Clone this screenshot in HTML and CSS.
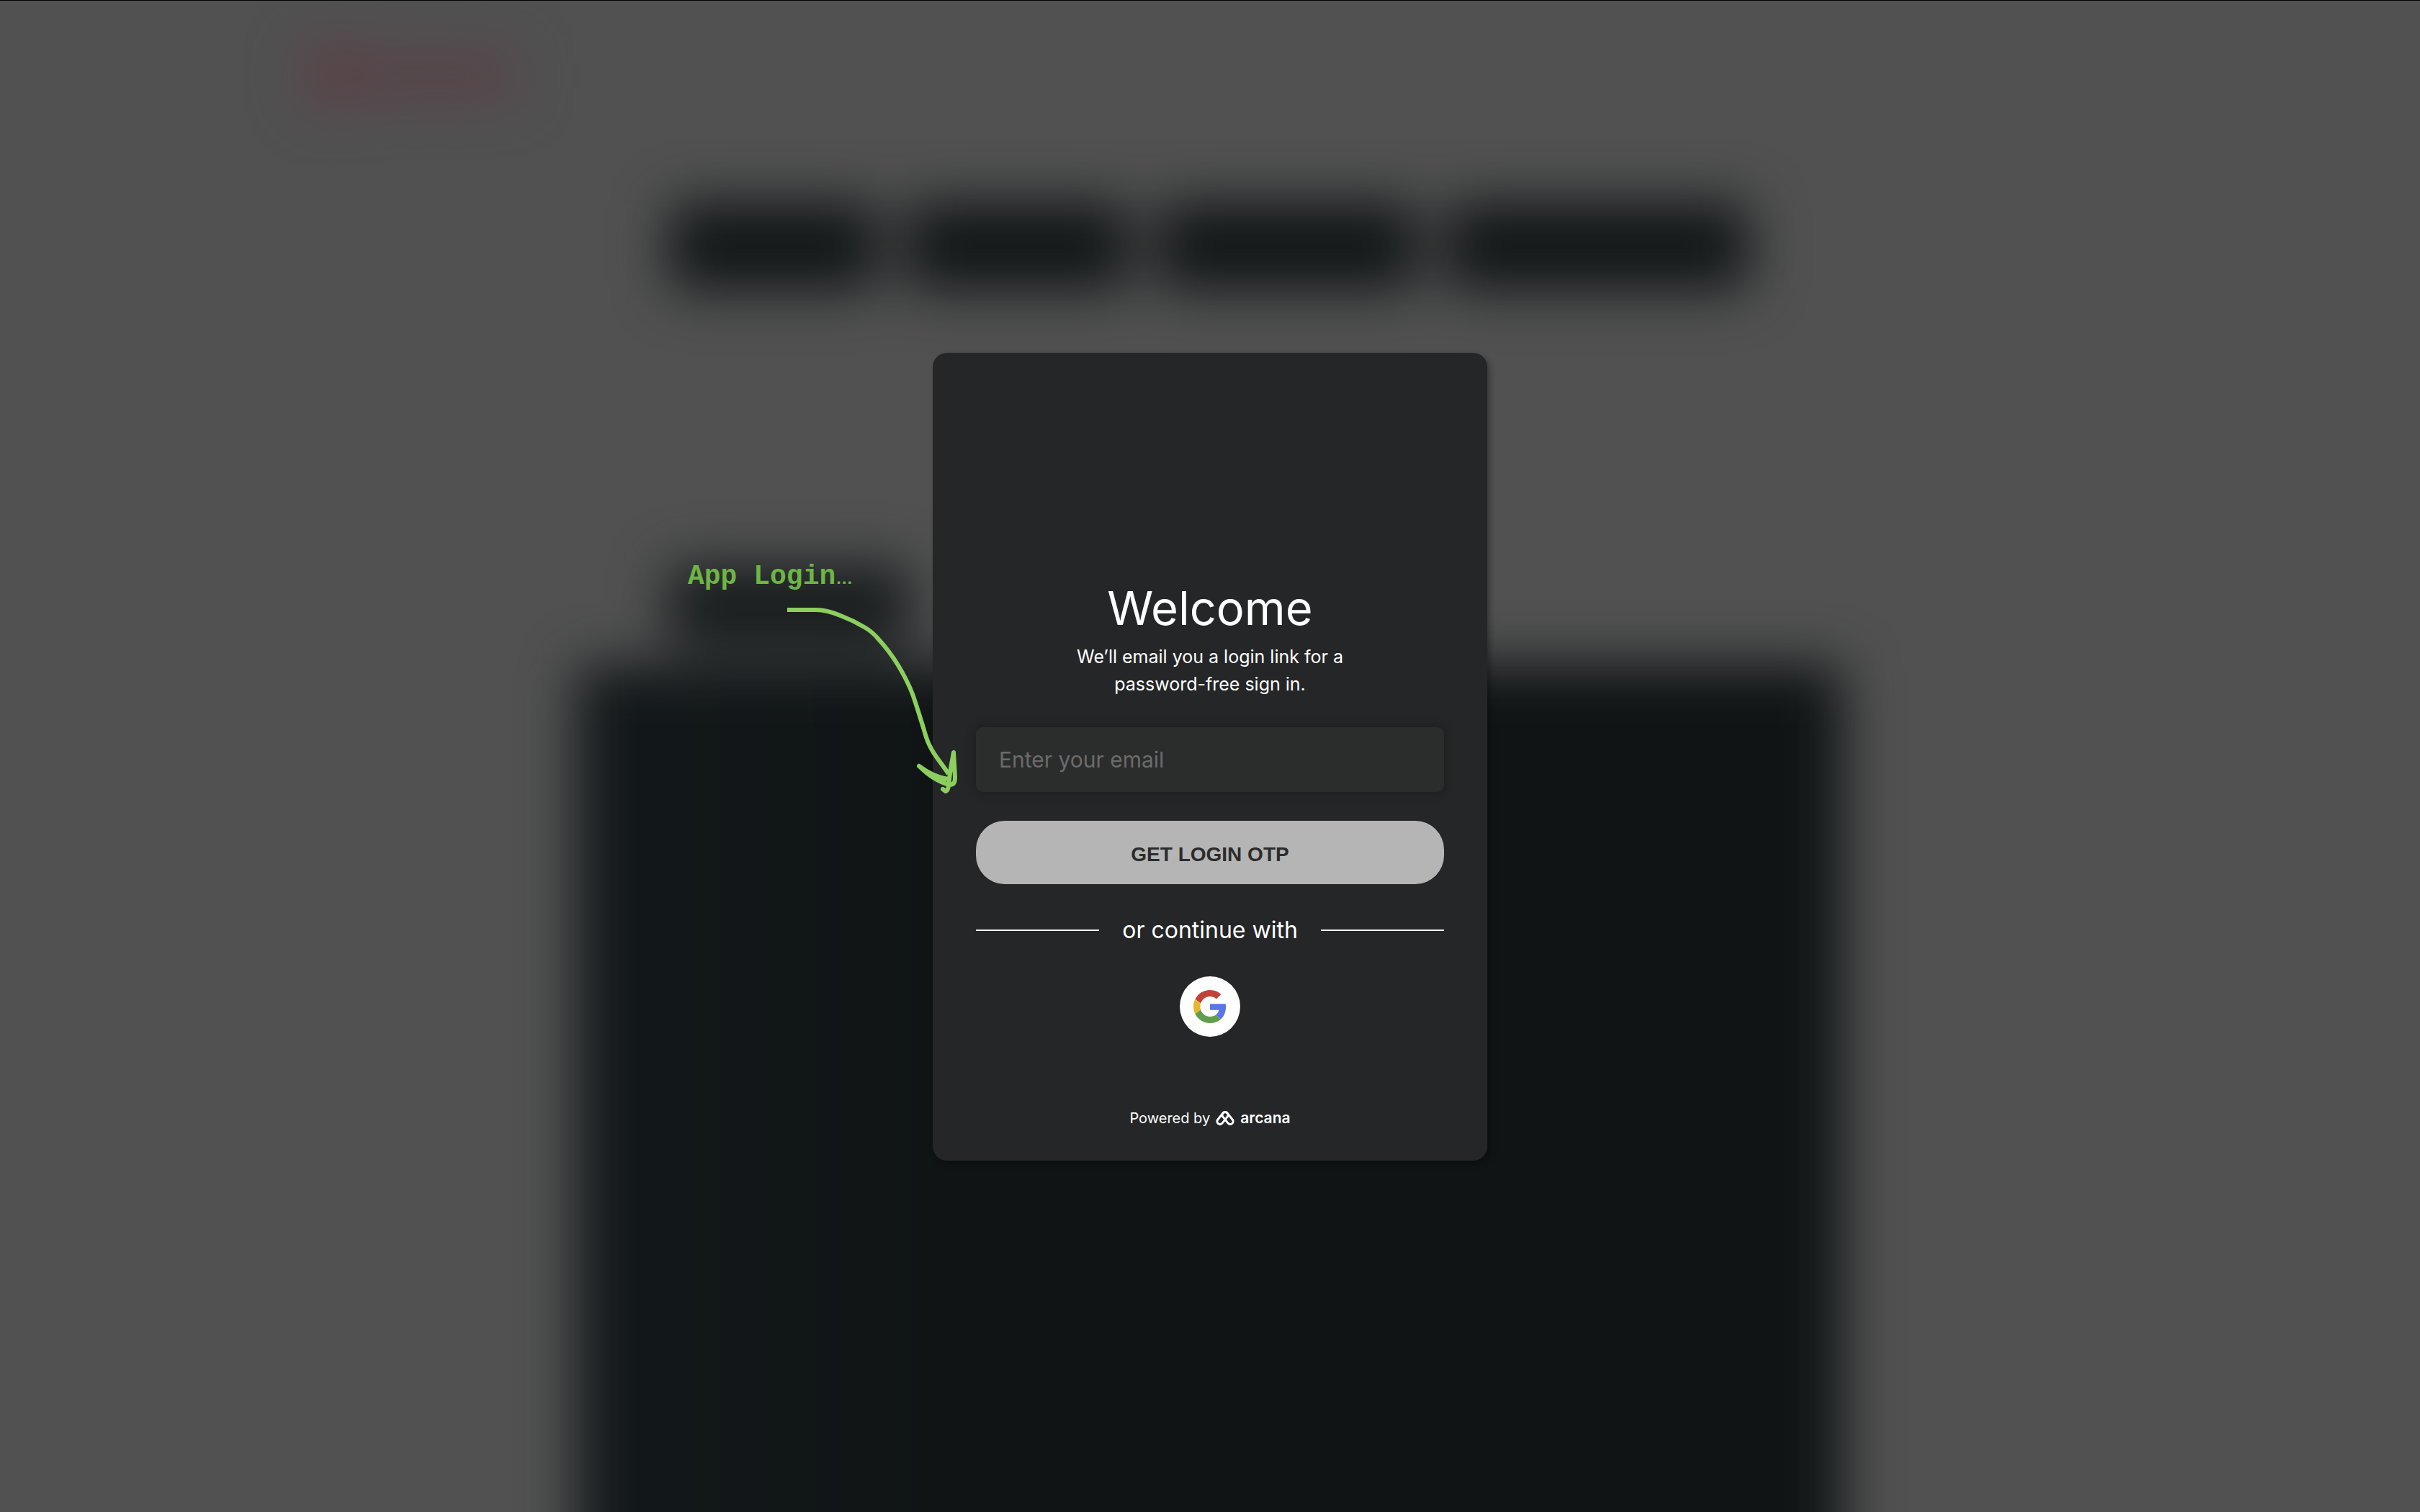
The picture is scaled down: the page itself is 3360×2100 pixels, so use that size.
FILE: index.html
```html
<!DOCTYPE html>
<html lang="en">
<head>
<meta charset="utf-8">
<meta name="viewport" content="width=device-width, initial-scale=1">
<title>App Login</title>
<link rel="stylesheet" href="styles.css">
</head>
<body>
<!-- Page behind the dialog, blurred -->
<div class="scene" aria-hidden="true">
  <div class="page">
    <div class="brand"><span class="brand-mark"></span><span class="brand-name"></span></div>
    <div class="tabs">
      <span class="tab tab-s"></span>
      <span class="tab tab-m"></span>
      <span class="tab tab-l"></span>
      <span class="tab tab-xl"></span>
    </div>
    <div class="label"></div>
    <div class="panel"></div>
  </div>
</div>

<main class="modal">
  <h1 class="title">Welcome</h1>
  <p class="subtitle">We’ll email you a login link for a password-free sign in.</p>
  <form class="form">
    <input class="email" type="email" placeholder="Enter your email" aria-label="Email">
    <button class="submit" type="button">GET LOGIN OTP</button>
  </form>
  <div class="divider"><span>or continue with</span></div>
  <button class="google" type="button" aria-label="Continue with Google">
    <svg viewBox="0 0 48 48" width="46" height="46">
      <path fill="#c04338" d="M24 9.5c3.54 0 6.71 1.22 9.21 3.6l6.85-6.85C35.9 2.38 30.47 0 24 0 14.62 0 6.51 5.38 2.56 13.22l7.98 6.19C12.43 13.72 17.74 9.5 24 9.5z"/>
      <path fill="#5a75ea" d="M46.98 24.55c0-1.57-.15-3.09-.38-4.55H24v9.02h12.94c-.58 2.96-2.26 5.48-4.78 7.18l7.73 6c4.51-4.18 7.09-10.36 7.09-17.65z"/>
      <path fill="#e5b62f" d="M10.53 28.59c-.48-1.45-.76-2.99-.76-4.59s.27-3.14.76-4.59l-7.98-6.19C.92 16.46 0 20.12 0 24c0 3.88.92 7.54 2.56 10.78l7.97-6.19z"/>
      <path fill="#5f9e4c" d="M24 48c6.48 0 11.93-2.13 15.89-5.81l-7.73-6c-2.15 1.45-4.92 2.3-8.16 2.3-6.26 0-11.57-4.22-13.47-9.91l-7.98 6.19C6.51 42.62 14.62 48 24 48z"/>
    </svg>
  </button>
  <footer class="powered">
    <span>Powered by</span>
    <svg viewBox="0 0 26 20" width="26" height="20" fill="none" stroke="#fff" stroke-width="3">
      <path d="M2.6 12.2 L9.8 3.1 A4 4 0 0 1 16.1 8.1 L8.9 17.1 A4 4 0 0 1 2.6 12.2 Z"/>
      <path d="M23.4 12.2 L16.2 3.1 A4 4 0 0 0 9.9 8.1 L17.1 17.1 A4 4 0 0 0 23.4 12.2 Z"/>
    </svg>
    <span class="arcana">arcana</span>
  </footer>

  <!-- Callout over the dialog's left edge -->
  <div class="callout">App Login<span class="dots">…</span></div>
  <svg class="arrow" viewBox="190 95 250 275" width="250" height="275" fill="none" stroke="#8ccf5f" stroke-width="6" stroke-linejoin="round">
    <path d="M193 106H233C245 106 255 109 267 114C280 119 290 124 300 130C309 135 315 141 320 147C331 159 339 170 347 183C356 198 362 210 367 223C374 243 378 257 383 273C386 284 388 290 392 297C397 308 408 320 417 334"/>
    <path stroke-linecap="round" d="M416 341C402 339 389 333 376 323C388 335 402 345 418 349C425 349 426 345 426 338L424 304C422 315 419 330 418 342C417 350 417 357 413 358L409 355M376 323C388 333 400 340 411 343"/>
  </svg>
</main>
</body>
</html>
```
FILE: styles.css
```css
* {
  box-sizing: border-box;
}

body {
  margin: 0;
  min-height: 100vh;
  display: grid;
  border-top: 1px solid #000;
  background: #515151;
  color: #fff;
  font-family: Inter, "Noto Sans", sans-serif;
}

.scene {
  grid-area: 1 / 1;
  display: grid;
  overflow: clip;
}

/* Runs past the scene so that the blur does not fade its lower edge */
.page {
  display: flex;
  flex-direction: column;
  width: 52%;
  min-width: 1000px;
  margin: 0 auto -160px;
  filter: blur(38px);
}

.brand {
  display: flex;
  align-items: center;
  height: 104px;
  margin: 51px 0 0 -386px;
}

.brand-mark {
  width: 80px;
  height: 88px;
  border-radius: 50%;
  background: #5c3f47;
}

.brand-name {
  width: 214px;
  height: 56px;
  background: #594148;
}

.tabs {
  display: flex;
  gap: 40px;
  height: 120px;
  margin: 126px 126px 0 124px;
}

.tab {
  border-radius: 16px;
  background: #121617;
}

.tab-s {
  flex: 287;
}

.tab-m {
  flex: 307;
}

.tab-l {
  flex: 358;
}

.tab-xl {
  flex: 417;
}

.label {
  width: 336px;
  height: 110px;
  margin: 384px 0 0 122px;
  border-radius: 16px;
  background: #171b1c;
}

.panel {
  flex: 1;
  margin: 28px -4px 0;
  border-radius: 16px;
  background: linear-gradient(90deg, #13181a, #101415 30%);
}

.modal {
  grid-area: 1 / 1;
  place-self: center;
  position: relative;
  display: flex;
  flex-direction: column;
  align-items: center;
  width: 770px;
  padding: 319px 60px 47px;
  border-radius: 20px;
  background: #252627;
  box-shadow: 4px 4px 8px rgba(0, 0, 0, 0.3);
}

.title {
  margin: 0;
  font-size: 65px;
  line-height: 72px;
  font-weight: 400;
}

.subtitle {
  width: 420px;
  margin: 12px 0 41px;
  font-size: 25px;
  line-height: 38px;
  text-align: center;
}

.form {
  display: flex;
  flex-direction: column;
  gap: 40px;
  width: 100%;
}

.email {
  width: 100%;
  height: 90px;
  padding: 0 32px;
  border: 0;
  border-radius: 10px;
  background: #2b2d2c;
  box-shadow: 0 0 12px 4px rgba(0, 0, 0, 0.16);
  color: #fff;
  font: 30px Inter, "Noto Sans", sans-serif;
}

.email::placeholder {
  color: #6b6b6b;
  opacity: 1;
}

.submit {
  height: 88px;
  padding: 6px 0 0;
  border: 0;
  border-radius: 40px;
  background: #b5b5b5;
  color: #2b2c2c;
  font: bold 28px "Liberation Sans", Arial, sans-serif;
}

.divider {
  display: flex;
  align-items: center;
  gap: 32px;
  width: 100%;
  margin: 46px 0;
  font-size: 32px;
  line-height: 36px;
}

.divider::before,
.divider::after {
  content: "";
  flex: 1;
  height: 2px;
  background: #fff;
}

.google {
  display: grid;
  place-items: center;
  width: 84px;
  height: 84px;
  padding: 0;
  border: 0;
  border-radius: 50%;
  background: #fff;
}

.powered {
  display: flex;
  align-items: center;
  gap: 8px;
  margin-top: 101px;
  font-size: 20px;
  line-height: 24px;
}

.arcana {
  font-size: 21px;
  font-weight: 600;
}

.callout {
  position: absolute;
  top: 289px;
  left: -340px;
  color: #6db544;
  font: bold 38px/44px "Courier New", "Liberation Mono", monospace;
  white-space: nowrap;
}

.dots {
  font: bold 24px "Liberation Sans", Arial, sans-serif;
}

.arrow {
  position: absolute;
  top: 346px;
  left: -205px;
}
```
